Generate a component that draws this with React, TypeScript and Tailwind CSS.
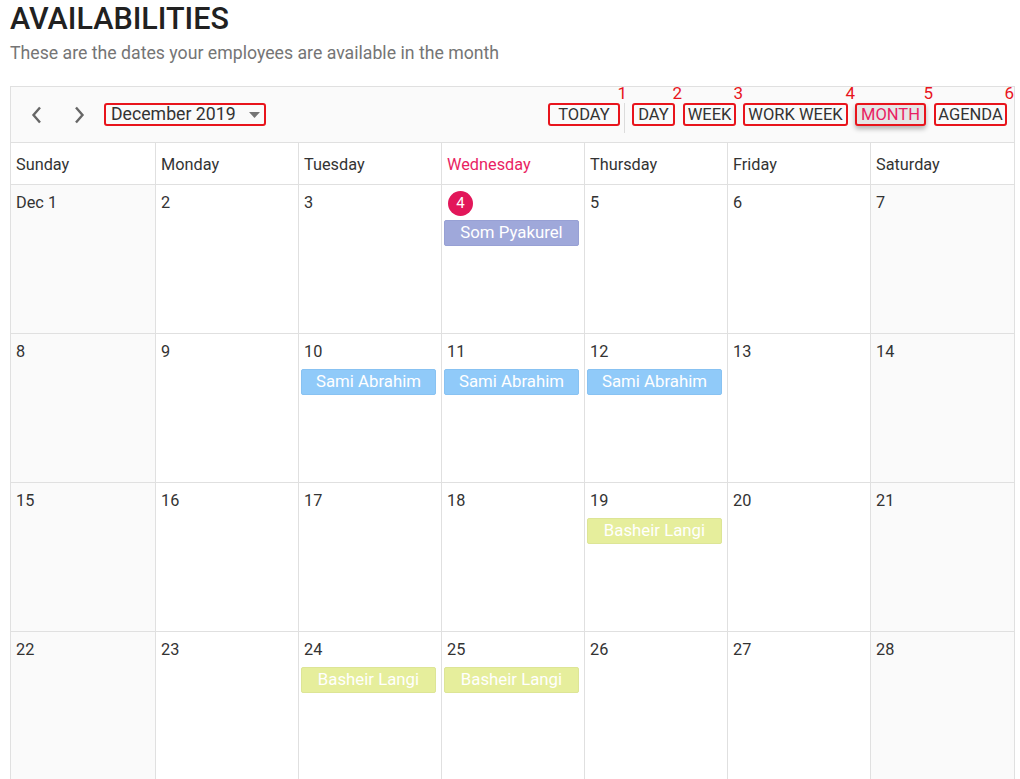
const days = ["Sunday", "Monday", "Tuesday", "Wednesday", "Thursday", "Friday", "Saturday"];

type Ev = { name: string; color: string };

const events: Record<string, Ev> = {
  "4": { name: "Som Pyakurel", color: "bg-[#9fa8da] border-[#97a0d4]" },
  "10": { name: "Sami Abrahim", color: "bg-[#90caf9] border-[#88c2f2]" },
  "11": { name: "Sami Abrahim", color: "bg-[#90caf9] border-[#88c2f2]" },
  "12": { name: "Sami Abrahim", color: "bg-[#90caf9] border-[#88c2f2]" },
  "19": { name: "Basheir Langi", color: "bg-[#e6ee9c] border-[#dde596]" },
  "24": { name: "Basheir Langi", color: "bg-[#e6ee9c] border-[#dde596]" },
  "25": { name: "Basheir Langi", color: "bg-[#e6ee9c] border-[#dde596]" },
};

const weeks = [
  ["Dec 1", "2", "3", "4", "5", "6", "7"],
  ["8", "9", "10", "11", "12", "13", "14"],
  ["15", "16", "17", "18", "19", "20", "21"],
  ["22", "23", "24", "25", "26", "27", "28"],
];

function Annotated({
  label,
  n,
  w,
  active,
}: {
  label: string;
  n: string;
  w: string;
  active?: boolean;
}) {
  return (
    <div
      className={`relative h-[23px] ${w} border-2 border-[#e8141c] rounded-[3px] flex items-center justify-center pt-[1px] text-[16.5px] leading-none ${
        active
          ? "bg-[#e6e6e6] text-[#e91e63] shadow-[0_3px_5px_rgba(0,0,0,0.28)]"
          : "text-[#333]"
      }`}
    >
      {label}
      <span className="absolute right-[-9px] top-[-20px] text-[17px] leading-none text-[#e8141c]">
        {n}
      </span>
    </div>
  );
}

export default function App() {
  return (
    <div className="bg-white pl-[10px] pr-[5px] text-[#333]" style={{ fontFamily: "Roboto, 'Noto Sans', sans-serif" }}>
      <h1 className="text-[30.5px] leading-[36px] font-medium text-[#212121] pt-[1px]">
        AVAILABILITIES
      </h1>
      <p className="mt-[4px] text-[17.7px] leading-[24px] text-[#757575]">
        These are the dates your employees are available in the month
      </p>

      <div className="mt-[21px] border border-[#e0e0e0]">
        {/* toolbar */}
        <div className="h-[56px] bg-[#fafafa] border-b border-[#e0e0e0] flex items-center justify-between pl-[20px] pr-[7px]">
          <div className="flex items-center">
            <svg width="12" height="18" viewBox="0 0 12 18" className="mr-[30px]">
              <polyline points="9,1.5 2.5,9 9,16.5" fill="none" stroke="#666" strokeWidth="2.4" />
            </svg>
            <svg width="12" height="18" viewBox="0 0 12 18" className="mr-[19px]">
              <polyline points="3,1.5 9.5,9 3,16.5" fill="none" stroke="#666" strokeWidth="2.4" />
            </svg>
            <div className="h-[23px] w-[162px] border-2 border-[#e8141c] rounded-[3px] flex items-center pl-[5px] pt-[1px] text-[17.7px] leading-none text-[#333]">
              December 2019
              <svg width="11" height="6" viewBox="0 0 11 6" className="ml-[13px]">
                <polygon points="0,0 11,0 5.5,6" fill="#757575" />
              </svg>
            </div>
          </div>
          <div className="flex items-center">
            <Annotated label="TODAY" n="1" w="w-[72px]" />
            <div className="w-px h-[30px] bg-[#dcdcdc] ml-[4px] mr-[7px] mt-[6px]" />
            <Annotated label="DAY" n="2" w="w-[43px]" />
            <div className="w-[8px]" />
            <Annotated label="WEEK" n="3" w="w-[53px]" />
            <div className="w-[7px]" />
            <Annotated label="WORK WEEK" n="4" w="w-[105px]" />
            <div className="w-[7px]" />
            <Annotated label="MONTH" n="5" w="w-[71px]" active />
            <div className="w-[8px]" />
            <Annotated label="AGENDA" n="6" w="w-[73px]" />
          </div>
        </div>

        {/* day headers */}
        <div className="grid grid-cols-[145px_repeat(6,143px)] border-b border-[#e0e0e0] bg-white">
          {days.map((d, i) => (
            <div
              key={d}
              className={`h-[41px] flex items-center pl-[5px] pt-[3px] text-[16.3px] ${
                i < 6 ? "border-r border-[#e0e0e0]" : ""
              } ${d === "Wednesday" ? "text-[#e91e63]" : "text-[#333]"}`}
            >
              {d}
            </div>
          ))}
        </div>

        {/* weeks */}
        {weeks.map((week, wi) => (
          <div key={wi} className="grid grid-cols-[145px_repeat(6,143px)]">
            {week.map((date, di) => {
              const ev = events[date];
              const today = wi === 0 && date === "4";
              return (
                <div
                  key={di}
                  className={`h-[149px] border-b border-[#e0e0e0] ${
                    di < 6 ? "border-r" : ""
                  } ${di === 0 || di === 6 ? "bg-[#fafafa]" : "bg-white"}`}
                >
                  <div className="h-[35px] flex items-center pl-[5px] pt-[1px]">
                    {today ? (
                      <span className="ml-[1px] w-[25px] h-[25px] rounded-full bg-[#e2175a] text-white text-[15px] flex items-center justify-center">
                        4
                      </span>
                    ) : (
                      <span className="text-[16.3px] text-[#333]">{date}</span>
                    )}
                  </div>
                  {ev && (
                    <div
                      className={`ml-[2px] mr-[5px] h-[26px] border rounded-[2px] flex items-center justify-center text-[16.8px] text-white ${ev.color}`}
                    >
                      {ev.name}
                    </div>
                  )}
                </div>
              );
            })}
          </div>
        ))}
      </div>
    </div>
  );
}
